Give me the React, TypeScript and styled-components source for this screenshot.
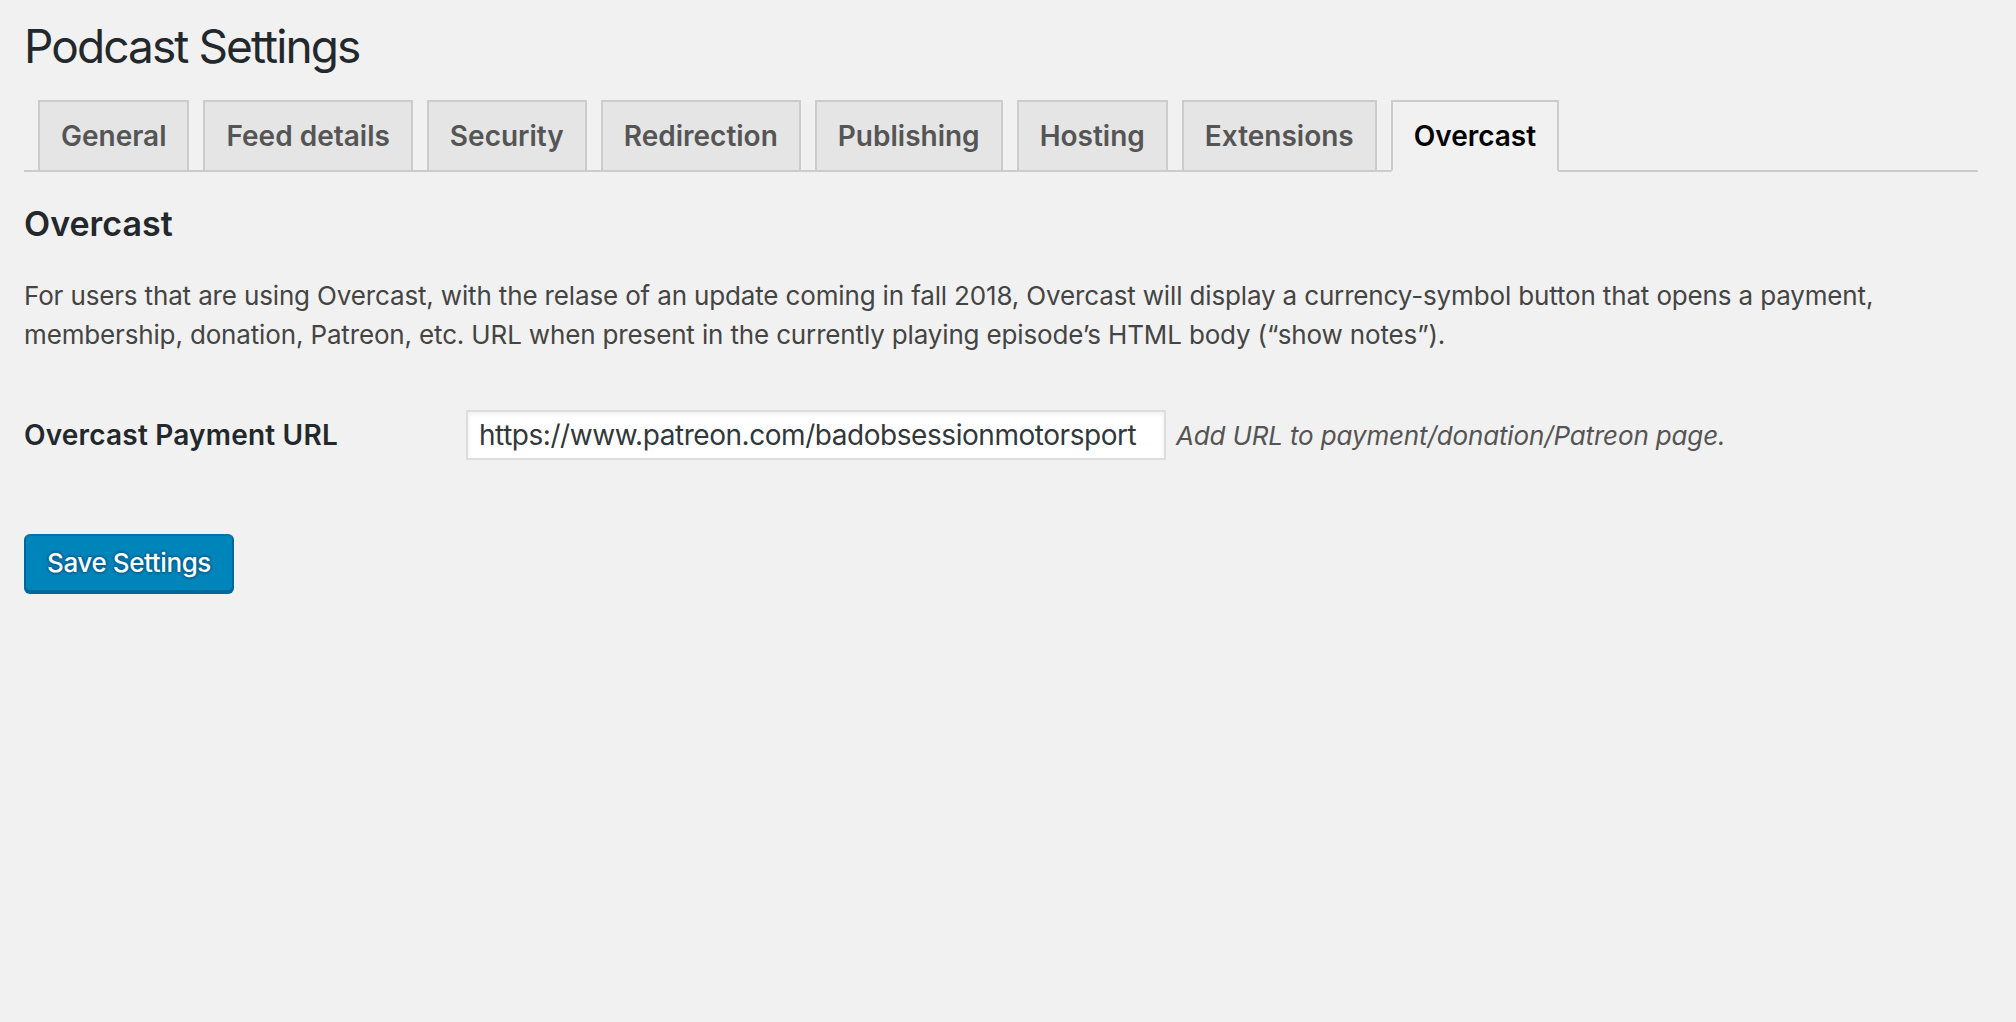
import React, { useState } from 'react'
import styled, { createGlobalStyle } from 'styled-components'

const GlobalStyle = createGlobalStyle`
    html, body {
        margin: 0;
        padding: 0;
        background: #f1f1f1;
    }
    body {
        min-height: 1022px;
        font-family: Inter, "Noto Sans", "Liberation Sans", sans-serif;
        color: #444;
    }
`;

const Page = styled.div`
    padding: 0 38px 0 24px;
`;

const Title = styled.h1`
    margin: 0;
    padding-top: 16px;
    font-size: 46px;
    font-weight: 400;
    line-height: 60px;
    letter-spacing: -1.9px;
    color: #23282d;
`;

const TabBar = styled.nav`
    display: flex;
    margin-top: 24px;
    border-bottom: 2px solid #ccc;
`;

const Tab = styled.a<{ $active?: boolean }>`
    display: block;
    margin: 0 0 -2px 14px;
    padding: 10px 21px;
    border: 2px solid #ccc;
    border-bottom-color: ${p => p.$active ? '#f1f1f1' : '#ccc'};
    background: ${p => p.$active ? '#f1f1f1' : '#e5e5e5'};
    color: ${p => p.$active ? '#000' : '#555'};
    font-size: 28px;
    font-weight: 600;
    line-height: 48px;
    text-decoration: none;
    cursor: pointer;
`;

const Heading = styled.h2`
    margin: 30px 0 0;
    font-size: 34px;
    font-weight: 600;
    line-height: 44px;
    color: #23282d;
`;

const Intro = styled.p`
    margin: 30px 0 0;
    font-size: 26px;
    line-height: 39px;
    letter-spacing: -0.15px;
    color: #444;
`;

const FormRow = styled.div`
    display: flex;
    align-items: baseline;
    margin-top: 56px;
`;

const Label = styled.label`
    width: 442px;
    flex-shrink: 0;
    font-size: 28px;
    font-weight: 600;
    letter-spacing: 0.2px;
    color: #23282d;
`;

const TextInput = styled.input`
    box-sizing: border-box;
    width: 700px;
    height: 50px;
    padding: 0 11px;
    border: 2px solid #ddd;
    background: #fff;
    box-shadow: inset 0 2px 4px rgba(0, 0, 0, 0.07);
    font-family: inherit;
    font-size: 28px;
    letter-spacing: -0.45px;
    color: #32373c;
    outline: none;
`;

const Description = styled.span`
    margin-left: 10px;
    font-size: 26px;
    font-style: italic;
    letter-spacing: -0.15px;
    color: #555;
`;

const SaveButton = styled.button`
    display: block;
    margin-top: 74px;
    height: 58px;
    padding: 0 21px 2px;
    border: 2px solid;
    border-color: #0073aa #006799 #006799;
    border-radius: 6px;
    background: #0085ba;
    box-shadow: 0 2px 0 #006799;
    color: #fff;
    font-family: inherit;
    font-size: 26px;
    font-weight: 500;
    letter-spacing: -0.4px;
    text-shadow: 0 -2px 2px #006799, 2px 0 2px #006799, 0 2px 2px #006799, -2px 0 2px #006799;
    cursor: pointer;
`;

const tabs = ['General', 'Feed details', 'Security', 'Redirection', 'Publishing', 'Hosting', 'Extensions', 'Overcast'];

const App: React.FC = () => {
    const [url, setUrl] = useState('https://www.patreon.com/badobsessionmotorsport');

    return (
        <Page>
            <GlobalStyle />
            <Title>Podcast Settings</Title>
            <TabBar>
                {tabs.map(t => <Tab key={t} $active={t === 'Overcast'}>{t}</Tab>)}
            </TabBar>
            <Heading>Overcast</Heading>
            <Intro>
                For users that are using Overcast, with the relase of an update coming in fall 2018, Overcast will display a currency-symbol button that opens a payment, membership, donation, Patreon, etc. URL when present in the currently playing episode’s HTML body (“show notes”).
            </Intro>
            <FormRow>
                <Label htmlFor="overcast-url">Overcast Payment URL</Label>
                <TextInput id="overcast-url" value={url} onChange={e => setUrl(e.target.value)} />
                <Description>Add URL to payment/donation/Patreon page.</Description>
            </FormRow>
            <SaveButton>Save Settings</SaveButton>
        </Page>
    )
}

export default App
